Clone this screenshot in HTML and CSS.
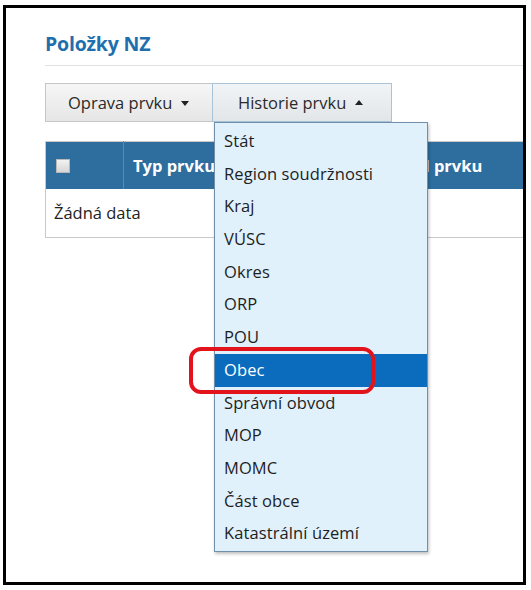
FILE: index.html
```html
<!DOCTYPE html>
<html lang="cs">
<head>
<meta charset="utf-8">
<title>Položky NZ</title>
<link rel="stylesheet" href="styles.css">
</head>
<body>
<div class="frame">
  <div class="content">
    <h2 class="title">Položky NZ</h2>
    <div class="rule"></div>
    <div class="toolbar">
      <button class="btn">Oprava prvku <span class="caret down"></span></button>
      <div class="dd">
        <button class="btn active">Historie prvku <span class="caret up"></span></button>
        <ul class="menu">
          <li>Stát</li>
          <li>Region soudržnosti</li>
          <li>Kraj</li>
          <li>VÚSC</li>
          <li>Okres</li>
          <li>ORP</li>
          <li>POU</li>
          <li class="sel">Obec</li>
          <li>Správní obvod</li>
          <li>MOP</li>
          <li>MOMC</li>
          <li>Část obce</li>
          <li>Katastrální území</li>
        </ul>
        <div class="mark"></div>
      </div>
    </div>
    <table class="grid">
      <thead>
        <tr>
          <th class="chk"><span class="box"></span></th>
          <th class="typ">Typ prvku</th>
          <th class="kod">Kód prvku</th>
        </tr>
      </thead>
      <tbody>
        <tr><td colspan="3" class="empty">Žádná data</td></tr>
      </tbody>
    </table>
  </div>
</div>
</body>
</html>
```
FILE: styles.css
```css
* { box-sizing: border-box; }
html, body { margin: 0; padding: 0; background: #fff; }
body { font-family: "Open Sans", "Segoe UI", "DejaVu Sans", sans-serif; color: #222; }

.frame {
  margin: 5px 0 0 3px;
  width: 523px;
  height: 580px;
  border: 3px solid #000;
  overflow: hidden;
}
.content {
  padding: 23px 0 0 39px;
}
.title {
  margin: 0;
  font-size: 19.5px;
  line-height: 26px;
  font-weight: 700;
  color: #1f6fae;
  letter-spacing: -0.2px;
}
.rule {
  margin-top: 8px;
  height: 1px;
  background: #e2e2e2;
}
.toolbar {
  display: flex;
  margin-top: 17px;
  height: 39px;
}
.btn {
  font-family: inherit;
  font-size: 16.5px;
  color: #2a2a2a;
  height: 39px;
  padding: 0 0 0 22px;
  border: 1px solid #c6c6c6;
  background: linear-gradient(#f6f6f6, #e6e6e6);
  display: flex;
  align-items: center;
  gap: 9px;
  cursor: pointer;
}
.btn:first-child { width: 168px; }
.dd { position: relative; margin-left: -1px; }
.btn.active {
  width: 180px;
  padding-left: 25px;
  border-color: #a9c3d9;
  background: linear-gradient(#f1f4f6, #e3e6e9);
}
.caret {
  width: 0; height: 0;
  border-left: 4px solid transparent;
  border-right: 4px solid transparent;
}
.caret.down { border-top: 5px solid #222; margin-top: 1px; }
.caret.up { border-bottom: 5px solid #222; margin-top: -1px; }

.menu {
  position: absolute;
  z-index: 5;
  top: 39px;
  left: 2px;
  width: 214px;
  margin: 0;
  padding: 2px 0 0;
  list-style: none;
  background: #e0f1fc;
  border: 1px solid #6f8fab;
  box-shadow: 1px 2px 3px rgba(0,0,0,0.25);
  height: 430px;
}
.menu li {
  height: 32.7px;
  line-height: 32.7px;
  padding-left: 9px;
  font-size: 16.5px;
  color: #1e1e1e;
  white-space: nowrap;
  letter-spacing: 0.1px;
}
.menu li.sel {
  background: #0b6cbd;
  color: #fff;
}
.mark {
  position: absolute;
  z-index: 6;
  left: -23px;
  top: 264px;
  width: 186px;
  height: 47px;
  border: 4px solid #e3131c;
  border-radius: 12px;
}

.grid {
  margin-top: 19px;
  width: 560px;
  border-collapse: collapse;
  border: 1px solid #c9c9c9;
}
.grid th {
  background: #2e6e9e;
  color: #fff;
  font-size: 16.5px;
  font-weight: 700;
  height: 47px;
  text-align: left;
  padding: 0 9px;
  border-right: 1px solid #5a8bb0;
}
.grid th.chk { width: 78px; padding-left: 10px; }
.grid th.typ { width: 262px; }
.grid th.kod { border-right: none; padding-left: 12px; }
.box {
  display: inline-block;
  width: 14px;
  height: 14px;
  background: linear-gradient(#f2f2f2, #d6d6d6);
  border: 1px solid #b8b8b8;
  vertical-align: -1px;
}
.grid td.empty {
  height: 49px;
  padding: 0 8px;
  font-size: 16.5px;
  color: #222;
}
```
